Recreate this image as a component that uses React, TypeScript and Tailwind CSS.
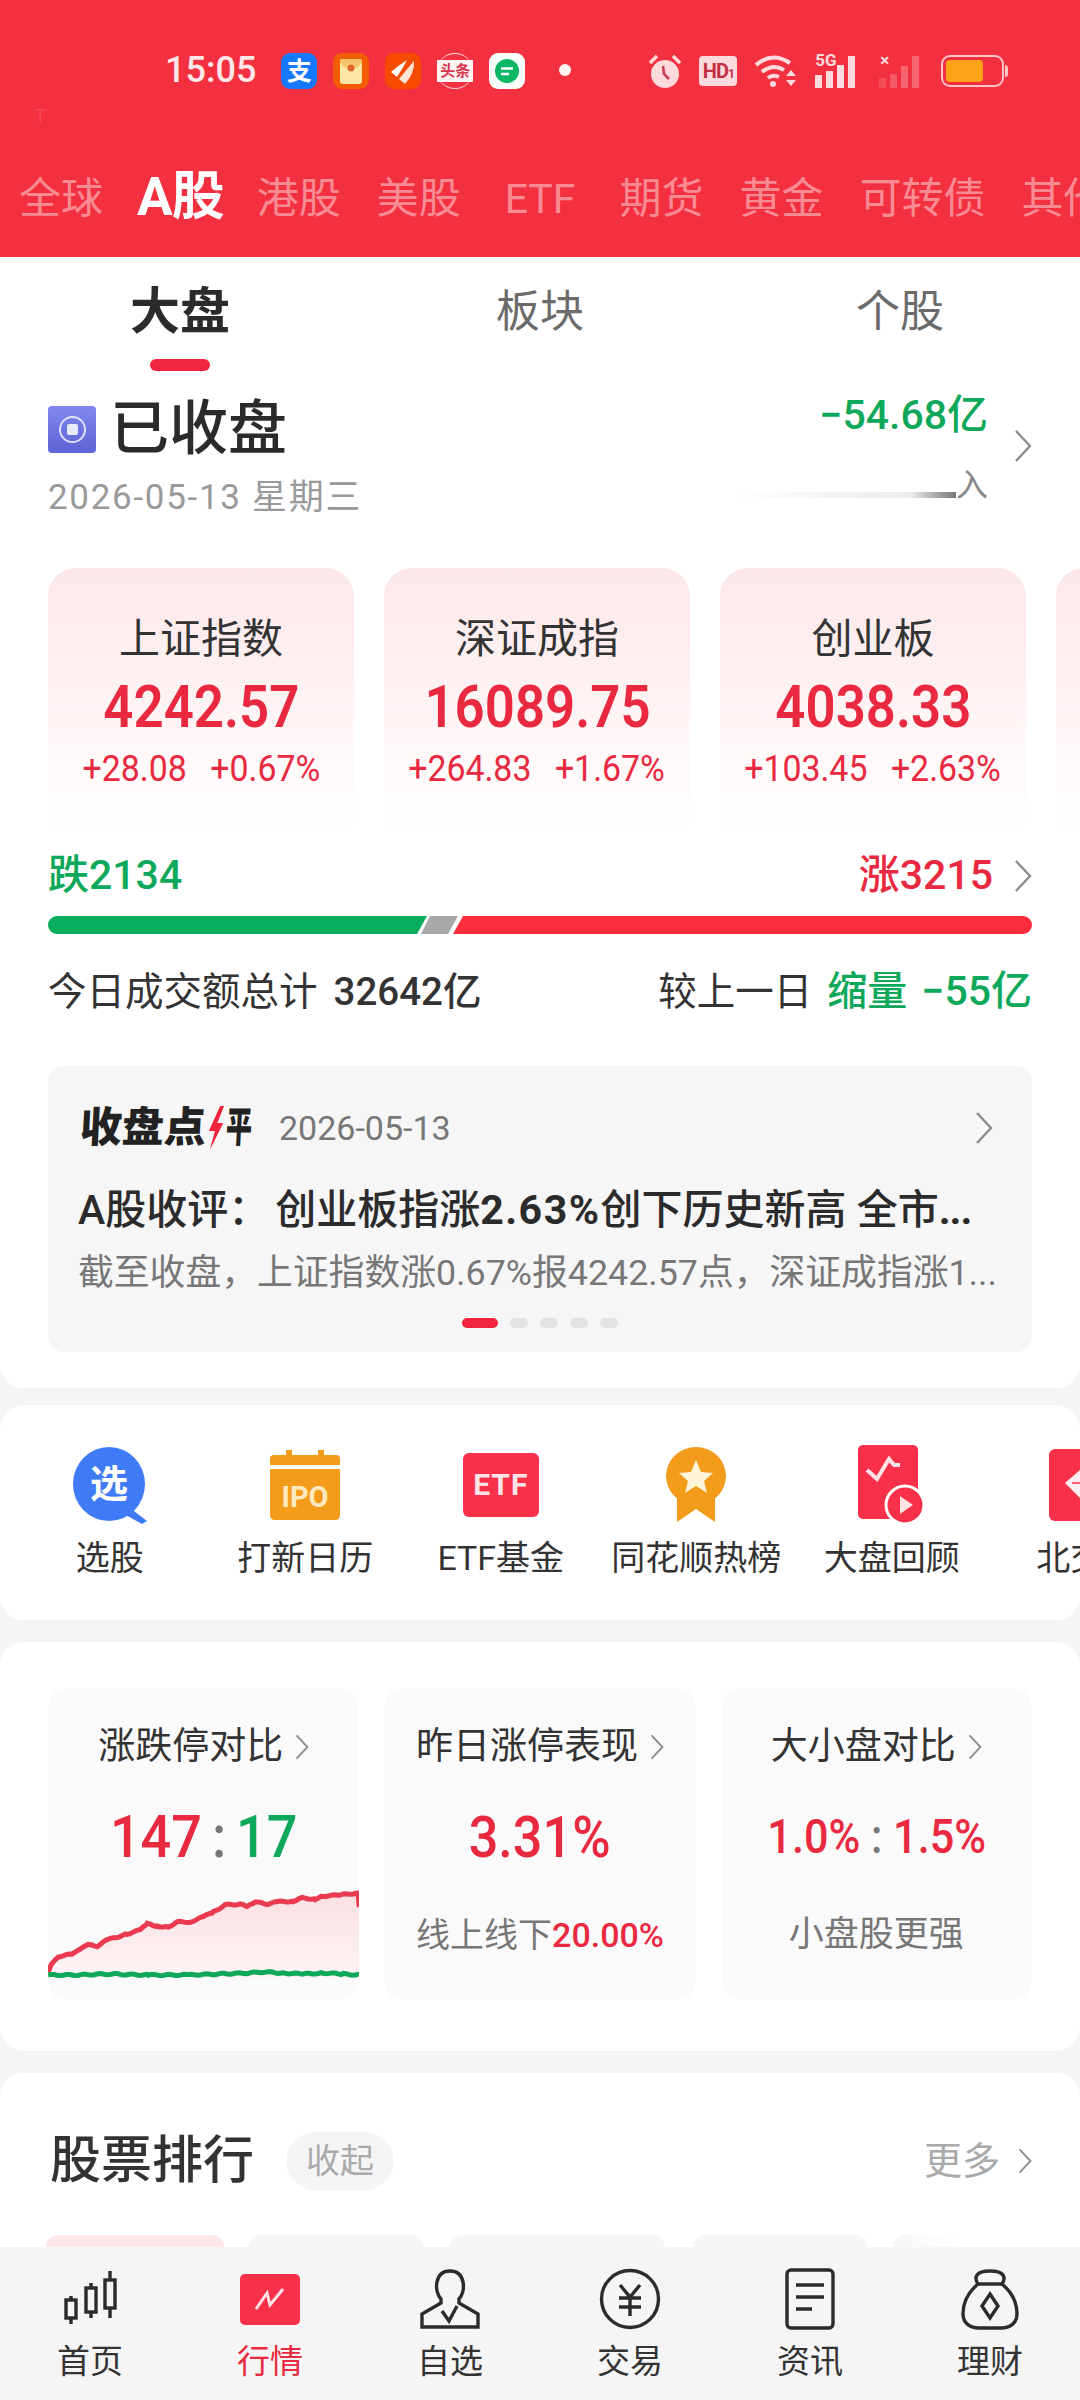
import React from "react";

const TOP_TABS = ["全球", "A股", "港股", "美股", "ETF", "期货", "黄金", "可转债", "其他"];

const INDEXES = [
  { name: "上证指数", price: "4242.57", diff: "+28.08", pct: "+0.67%" },
  { name: "深证成指", price: "16089.75", diff: "+264.83", pct: "+1.67%" },
  { name: "创业板", price: "4038.33", diff: "+103.45", pct: "+2.63%" },
];

const RED_KNOTS = [
  [0, 82], [4, 73], [12, 66], [25, 64], [34, 57], [40, 55], [49, 56], [59, 50], [79, 44], [92, 40],
  [99, 34], [109, 36], [120, 37], [129, 32], [142, 32], [155, 27], [165, 22], [177, 15], [192, 14],
  [199, 17], [207, 12], [219, 14], [229, 12], [245, 11], [254, 8], [267, 9], [275, 6], [292, 5], [309, 3],
];
const GREEN_KNOTS = [
  [0, 85], [30, 85], [60, 84], [100, 85], [140, 85], [170, 84], [200, 83], [215, 82], [235, 83], [255, 84], [275, 83], [295, 84], [311, 85],
];

// adds a small wobble between the knots so the lines look like real intraday data
function wobble(knots: number[][]) {
  const out: string[] = [];
  for (let i = 0; i < knots.length - 1; i++) {
    const [x0, y0] = knots[i];
    const [x1, y1] = knots[i + 1];
    for (let x = x0; x < x1; x += 3) {
      const y = y0 + ((y1 - y0) * (x - x0)) / (x1 - x0) + Math.sin(x * 1.7) * 0.7;
      out.push(`${x},${y.toFixed(1)}`);
    }
  }
  const last = knots[knots.length - 1];
  out.push(`${last[0]},${last[1]}`);
  return out.join(" ");
}

const RED_LINE = wobble(RED_KNOTS) + " 310,4 311,17";
const GREEN_LINE = wobble(GREEN_KNOTS);

function Chevron({ className = "w-[18px] h-[32px]" }: { className?: string }) {
  return (
    <svg viewBox="0 0 18 32" className={`shrink-0 ${className}`} fill="none" stroke="#8d8d8d" strokeWidth="2.4">
      <polyline points="2,1 16,16 2,31" />
    </svg>
  );
}

function StatusBar() {
  return (
    <div className="h-[122px] pt-[48px] pl-[165px] flex items-start">
      <span className="text-[36px] leading-[44px] text-[#ffe6e8] font-medium">15:05</span>
      <div className="flex gap-[16px] ml-[25px] mt-[5px]">
        <div className="w-[36px] h-[36px] rounded-[9px] bg-[#1677ff] flex items-center justify-center text-white text-[25px] leading-none font-bold">支</div>
        <svg viewBox="0 0 36 36" className="w-[36px] h-[36px]">
          <rect width="36" height="36" rx="9" fill="#f25c05" />
          <rect x="7" y="6" width="22" height="25" rx="3" fill="#fde7a6" />
          <path d="M7 10 Q18 22 29 10 V8 Q29 6 27 6 H9 Q7 6 7 8 Z" fill="#f8c66a" />
          <circle cx="18" cy="15" r="3.5" fill="#e0662a" />
        </svg>
        <svg viewBox="0 0 36 36" className="w-[36px] h-[36px]">
          <rect width="36" height="36" rx="9" fill="#f54a00" />
          <path d="M6 19 Q14 12 22 7 Q18 15 12 24 Z" fill="#fff" />
          <path d="M14 26 Q22 16 29 8 Q30 20 20 31 Z" fill="#fde3d2" />
        </svg>
        <div className="w-[36px] h-[36px] rounded-full border-y-[1px] border-[#ffd9dc] flex items-center justify-center">
          <div className="w-[36px] h-[22px] bg-[#fff3f3] text-[#d8344a] text-[15px] leading-[22px] font-bold text-center">头条</div>
        </div>
        <svg viewBox="0 0 36 36" className="w-[36px] h-[36px]">
          <rect width="36" height="36" rx="9" fill="#f6fffa" />
          <circle cx="18" cy="18" r="12" fill="#0bb765" />
          <path d="M12 15.5 H24 M12 21 H20" stroke="#fff" strokeWidth="2.4" />
        </svg>
        <div className="w-[12px] h-[12px] rounded-full bg-[#fff3f3] ml-[18px] mt-[11px]" />
      </div>
      <div className="ml-[77px] mt-[3px]">
        <StatusRight />
      </div>
    </div>
  );
}

function StatusRight() {
  const c = "#ffdadd";
  return (
    <div className="flex items-center h-[40px] gap-[17px]">
      <svg viewBox="0 0 34 36" className="w-[34px] h-[36px]">
        <circle cx="17" cy="21" r="14" fill={c} />
        <path d="M2 10 L9 3 M32 10 L25 3" stroke={c} strokeWidth="3.4" />
        <path d="M15 13 L16 21 L21 26" stroke="#c8404f" strokeWidth="2.6" fill="none" />
      </svg>
      <div className="w-[38px] h-[30px] rounded-[4px] bg-[#ffdadd] text-[#c22f42] text-[20px] leading-[30px] font-bold text-center tracking-[-1px]">
        HD<span className="text-[12px]">1</span>
      </div>
      <svg viewBox="0 0 44 34" className="w-[44px] h-[34px]" fill="none" stroke={c} strokeWidth="4">
        <path d="M2 11 Q18 -3 36 9" />
        <path d="M8 18 Q19 9 30 16" />
        <path d="M14 24 Q19 20 25 23" />
        <circle cx="19" cy="30" r="3" fill={c} stroke="none" />
        <path d="M32 22 L37 16 L42 22 Z M32 26 L42 26 L37 32 Z" fill={c} stroke="none" />
      </svg>
      <div className="relative w-[47px] h-[34px]">
        <span className="absolute left-0 top-[-4px] text-[17px] leading-[20px] font-bold text-[#ffdadd]">5G</span>
        <div className="absolute left-0 bottom-0 flex items-end gap-[4px]">
          <div className="w-[7px] h-[13px] bg-[#ffdadd]" />
          <div className="w-[7px] h-[17px] bg-[#ffdadd]" />
          <div className="w-[7px] h-[23px] bg-[#ffdadd]" />
          <div className="w-[7px] h-[32px] bg-[#ffdadd]" />
        </div>
      </div>
      <div className="relative w-[45px] h-[34px]">
        <span className="absolute left-[1px] top-[-3px] text-[17px] leading-[18px] font-bold text-[#ffdadd]">×</span>
        <div className="absolute left-0 bottom-0 flex items-end gap-[4px]">
          <div className="w-[7px] h-[10px] bg-white/15" />
          <div className="w-[7px] h-[14px] bg-white/20" />
          <div className="w-[7px] h-[22px] bg-white/25" />
          <div className="w-[7px] h-[32px] bg-white/25" />
        </div>
      </div>
      <div className="flex items-center">
        <div className="w-[63px] h-[32px] rounded-[9px] border-[2px] border-[#ffc4c8] p-[3px]">
          <div className="w-[37px] h-full rounded-[4px] bg-[#ffa319]" />
        </div>
        <div className="w-[3px] h-[12px] bg-[#ffc4c8] ml-[1px] rounded-r-sm" />
      </div>
    </div>
  );
}

function TopTabs() {
  return (
    <div className="h-[135px] pl-[19px] pt-[47px] flex items-start gap-[36px] whitespace-nowrap overflow-hidden">
      {TOP_TABS.map((t) =>
        t === "A股" ? (
          <span key={t} className="text-[53px] leading-[60px] -mt-[2px] -ml-[2px] -mr-[3px] font-bold text-white tracking-[-1px] shrink-0">{t}</span>
        ) : t === "ETF" ? (
          <span key={t} className="text-[41px] leading-[60px] mx-[8px] text-white/45 shrink-0">{t}</span>
        ) : (
          <span key={t} className="text-[42px] leading-[60px] text-white/45 shrink-0">{t}</span>
        )
      )}
    </div>
  );
}

function MarketTabs() {
  return (
    <div className="grid grid-cols-3 h-[115px]">
      <div className="flex flex-col items-center pt-[25px]">
        <span className="text-[50px] leading-[60px] font-bold text-[#2b2b2b]">大盘</span>
        <div className="w-[60px] h-[12px] rounded-full bg-[#f0243c] mt-[17px]" />
      </div>
      <div className="flex justify-center pt-[25px]">
        <span className="text-[44px] leading-[60px] text-[#6b6b6b]">板块</span>
      </div>
      <div className="flex justify-center pt-[25px]">
        <span className="text-[44px] leading-[60px] text-[#6b6b6b]">个股</span>
      </div>
    </div>
  );
}

function MarketStatus() {
  return (
    <div className="flex justify-between px-[48px]">
      <div>
        <div className="flex items-center h-[56px] mt-[29px] gap-[14px]">
          <div className="w-[48px] h-[47px] rounded-[4px] bg-gradient-to-b from-[#8088ee] to-[#5d62d6] flex items-center justify-center">
            <div className="w-[27px] h-[27px] rounded-full border-[2px] border-[#dfe0fb] flex items-center justify-center">
              <div className="w-[11px] h-[11px] rounded-[2px] bg-[#e9eafc]" />
            </div>
          </div>
          <span className="text-[59px] leading-[56px] font-medium text-[#2b2b2b]">已收盘</span>
        </div>
        <div className="mt-[21px] text-[35px] leading-[40px] text-[#999] tracking-[1.7px]">2026-05-13 星期三</div>
      </div>
      <div className="flex gap-[26px]">
        <div className="flex flex-col items-end">
          <span className="mt-[21px] text-[41px] leading-[44px] font-medium text-[#0ea85a]">−54.68亿</span>
          <div className="flex items-end mt-[31px]">
            <div className="w-[225px] h-[6px] mb-[4px] bg-gradient-to-r from-white via-[#ececec] via-80% to-[#777]" />
            <span className="text-[32px] leading-[34px] text-[#888]">入</span>
          </div>
        </div>
        <div className="mt-[58px]"><Chevron /></div>
      </div>
    </div>
  );
}

function IndexCards() {
  return (
    <div className="flex gap-[30px] pl-[48px] mt-[50px] overflow-hidden">
      {INDEXES.map((x) => (
        <div key={x.name} className="w-[306px] h-[264px] shrink-0 rounded-t-[28px] bg-gradient-to-b from-[#fde7e9] to-white flex flex-col items-center pt-[47px]">
          <span className="text-[41px] leading-[48px] text-[#333]">{x.name}</span>
          <span className="mt-[14px] text-[60px] leading-[60px] font-semibold text-[#e8293f] scale-x-[0.88]">{x.price}</span>
          <div className="mt-[12px] flex gap-[25px] text-[36px] leading-[40px] text-[#e8293f] scale-x-[0.94] whitespace-nowrap">
            <span>{x.diff}</span>
            <span>{x.pct}</span>
          </div>
        </div>
      ))}
      <div className="w-[306px] h-[264px] shrink-0 rounded-t-[28px] bg-gradient-to-b from-[#fde7e9] to-white" />
    </div>
  );
}

function RiseFall() {
  return (
    <div className="px-[48px]">
      <div className="flex justify-between items-center h-[50px] mt-[19px] text-[41px]">
        <span className="text-[#0ea85a] font-medium">跌2134</span>
        <div className="flex items-center gap-[21px]">
          <span className="text-[#e8293f] font-medium">涨3215</span>
          <Chevron />
        </div>
      </div>
      <div className="flex mt-[15px] h-[18px] rounded-full overflow-hidden">
        <div className="w-[379px] bg-[#08ae5c] [clip-path:polygon(0_0,100%_0,369px_100%,0_100%)]" />
        <div className="w-[37px] -ml-[6px] bg-[#a8a8a8] [clip-path:polygon(9px_0,37px_0,27px_100%,0_100%)]" />
        <div className="flex-1 -ml-[5px] bg-[#fb2d3c] [clip-path:polygon(10px_0,100%_0,100%_100%,0_100%)]" />
      </div>
      <div className="flex justify-between items-center h-[50px] mt-[33px] text-[38.5px] text-[#333] whitespace-nowrap">
        <span>今日成交额总计<span className="ml-[16px] font-medium">32642亿</span></span>
        <span className="flex items-center">
          较上一日
          <span className="ml-[15px] text-[40px] font-medium text-[#0ea85a]">缩量</span>
          <span className="ml-[14px] text-[41px] font-medium text-[#0ea85a]">−55亿</span>
        </span>
      </div>
    </div>
  );
}

function ReviewCard() {
  return (
    <div className="mx-[48px] mt-[49px] h-[286px] rounded-[16px] bg-[#f6f6f6] px-[30px] pt-[38px]">
      <div className="flex items-center h-[48px]">
        <span className="text-[42px] leading-[48px] font-black text-[#222] -skew-x-3 ml-[2px] flex items-center">
          收盘点
          <svg viewBox="0 0 16 44" className="w-[16px] h-[44px] ml-[2px]">
            <path d="M11 0 L1 25 H7 L3 44 L15 17 H9 L15 0 Z" fill="#f0243c" />
          </svg>
          <span className="inline-block w-[26px] ml-[2px] scale-x-[0.62] origin-left">平</span>
        </span>
        <span className="ml-[27px] text-[34px] leading-[48px] text-[#777]">2026-05-13</span>
        <div className="ml-auto mr-[9px]"><Chevron /></div>
      </div>
      <div className="mt-[33px] text-[41px] leading-[50px] font-medium text-[#2b2b2b] whitespace-nowrap overflow-hidden">
        A股收评：<span className="ml-[6px]">创业板指涨</span><span className="font-bold tracking-[1.5px]">2.63%</span>创下历史新高 全市<span className="font-bold tracking-[-1px]">...</span>
      </div>
      <div className="mt-[15px] text-[35.8px] leading-[46px] text-[#777] whitespace-nowrap overflow-hidden">
        截至收盘，上证指数涨0.67%报4242.57点，深证成指涨1...
      </div>
      <div className="flex justify-center gap-[12px] mt-[22px]">
        <div className="w-[36px] h-[10px] rounded-full bg-[#f0243c]" />
        <div className="w-[18px] h-[10px] rounded-full bg-[#e2e2e2]" />
        <div className="w-[18px] h-[10px] rounded-full bg-[#e2e2e2]" />
        <div className="w-[18px] h-[10px] rounded-full bg-[#e2e2e2]" />
        <div className="w-[18px] h-[10px] rounded-full bg-[#e2e2e2]" />
      </div>
    </div>
  );
}

function QuickIcon({ kind }: { kind: string }) {
  if (kind === "pick") {
    return (
      <svg viewBox="0 0 76 78" className="w-[76px] h-[78px]">
        <ellipse cx="37" cy="38" rx="36" ry="37" fill="#3f7bf7" />
        <path d="M58 62 L75 75 L70 78 L52 68 Z" fill="#3f7bf7" />
        <text x="37" y="51" textAnchor="middle" fontSize="38" fontWeight="700" fill="#fff">选</text>
      </svg>
    );
  }
  if (kind === "ipo") {
    return (
      <svg viewBox="0 0 70 72" className="w-[70px] h-[72px]">
        <path d="M4 6 H16 V1 H22 V6 H48 V1 H54 V6 H66 Q70 6 70 10 V16 H0 V10 Q0 6 4 6 Z" fill="#f39c1b" />
        <path d="M0 20 H70 V66 Q70 71 65 71 H5 Q0 71 0 66 Z" fill="#f39c1b" />
        <text x="35" y="58" textAnchor="middle" fontSize="29" fontWeight="700" fill="#ffe9bf">IPO</text>
      </svg>
    );
  }
  if (kind === "etf") {
    return (
      <div className="w-[76px] h-[64px] rounded-[6px] bg-[#f8304a] text-[#ffe3e6] text-[30px] leading-[64px] font-bold text-center tracking-[1px]">ETF</div>
    );
  }
  if (kind === "medal") {
    return (
      <svg viewBox="0 0 62 76" className="w-[62px] h-[76px]">
        <path d="M12 50 V75 L31 62 L50 75 V50 Z" fill="#f39c1b" />
        <ellipse cx="31" cy="29" rx="30" ry="29" fill="#f39c1b" />
        <path d="M31 13 L36 25 L48 26 L39 34 L42 46 L31 39 L20 46 L23 34 L14 26 L26 25 Z" fill="#fff3d8" />
      </svg>
    );
  }
  if (kind === "review") {
    return (
      <svg viewBox="0 0 68 80" className="w-[68px] h-[80px]">
        <rect x="0" y="0" width="60" height="74" rx="5" fill="#f8304a" />
        <path d="M9 25 L19 34 L31 14 L36 20 L42 20" fill="none" stroke="#ffe3e6" strokeWidth="4" />
        <circle cx="47" cy="60" r="19" fill="#f8304a" stroke="#fff" strokeWidth="3" />
        <path d="M42 51 L55 60 L42 69 Z" fill="#ffe3e6" />
      </svg>
    );
  }
  return (
    <svg viewBox="0 0 76 72" className="w-[76px] h-[72px]">
      <rect width="76" height="72" rx="6" fill="#f8304a" />
      <path d="M16 34 L32 20 H60 V52 H34 Z" fill="#ffeef0" />
      <path d="M23 34 H31" stroke="#f8304a" strokeWidth="1.5" />
    </svg>
  );
}

function QuickEntries() {
  const items = [
    { kind: "pick", label: "选股" },
    { kind: "ipo", label: "打新日历" },
    { kind: "etf", label: "ETF基金" },
    { kind: "medal", label: "同花顺热榜" },
    { kind: "review", label: "大盘回顾" },
    { kind: "bei", label: "北交所" },
  ];
  return (
    <section className="mt-[17px] h-[215px] rounded-[24px] bg-white flex pl-[12px] pt-[40px] overflow-hidden">
      {items.map((i) => (
        <div key={i.label} className="w-[195.5px] shrink-0 flex flex-col items-center">
          <div className="h-[80px] flex items-center justify-center"><QuickIcon kind={i.kind} /></div>
          <span className="mt-[11px] text-[34px] leading-[44px] text-[#333] whitespace-nowrap">{i.label}</span>
        </div>
      ))}
    </section>
  );
}

function CardTitle({ text }: { text: string }) {
  return (
    <div className="flex items-center justify-center gap-[12px] h-[42px] mt-[38px]">
      <span className="text-[37px] leading-[42px] text-[#333]">{text}</span>
      <Chevron className="w-[14px] h-[26px]" />
    </div>
  );
}

function CompareCards() {
  return (
    <section className="mt-[22px] h-[409px] rounded-[24px] bg-white px-[48px] pt-[46px] grid grid-cols-3 gap-x-[25px] items-start">
      <div className="h-[312px] rounded-[20px] bg-[#fafafa] overflow-hidden">
        <CardTitle text="涨跌停对比" />
        <div className="mt-[39px] h-[60px] flex justify-center gap-[11px] text-[60px] leading-[60px] font-medium scale-x-[0.9]">
          <span className="text-[#e8293f]">147</span>
          <span className="text-[#777]">:</span>
          <span className="text-[#0ea85a]">17</span>
        </div>
        <svg viewBox="0 0 311 88" className="mt-[23px] w-full h-[88px]">
          <defs>
            <linearGradient id="upFill" x1="0" y1="0" x2="0" y2="1">
              <stop offset="0" stopColor="#fbdfe2" />
              <stop offset="1" stopColor="#fdf4f5" />
            </linearGradient>
          </defs>
          <polygon points={`0,88 ${RED_LINE} 311,88`} fill="url(#upFill)" />
          <polyline points={RED_LINE} fill="none" stroke="#ea3a50" strokeWidth="5" />
          <polyline points={GREEN_LINE} fill="none" stroke="#0ea85a" strokeWidth="5" />
        </svg>
      </div>
      <div className="h-[312px] rounded-[20px] bg-[#fafafa]">
        <CardTitle text="昨日涨停表现" />
        <div className="mt-[39px] text-center text-[58px] leading-[60px] font-medium text-[#e8293f] scale-x-[0.9]">3.31%</div>
        <div className="mt-[46px] text-center text-[34px] leading-[44px] text-[#777]">
          线上线下<span className="text-[#e8293f] font-medium">20.00%</span>
        </div>
      </div>
      <div className="h-[312px] rounded-[20px] bg-[#fafafa]">
        <CardTitle text="大小盘对比" />
        <div className="mt-[39px] text-center text-[48px] leading-[60px] font-medium text-[#e8293f] scale-x-[0.9]">
          1.0% <span className="text-[#777]">:</span> 1.5%
        </div>
        <div className="mt-[46px] text-center text-[35px] leading-[44px] text-[#777]">小盘股更强</div>
      </div>
    </section>
  );
}

function StockRank() {
  return (
    <section className="mt-[22px] flex-1 rounded-t-[24px] bg-white pt-[59px] overflow-hidden">
      <div className="flex items-center h-[58px] pl-[50px] pr-[48px]">
        <span className="text-[51px] leading-[58px] font-medium text-[#333]">股票排行</span>
        <span className="ml-[32px] w-[108px] h-[58px] rounded-full bg-[#f5f5f5] text-[34px] leading-[58px] text-center text-[#aaa]">收起</span>
        <span className="ml-auto text-[38px] leading-[58px] text-[#aaa]">更多</span>
        <Chevron className="w-[14px] h-[30px] ml-[18px]" />
      </div>
      <div className="flex mt-[45px] pl-[46px] h-[30px]">
        <div className="w-[178px] rounded-t-[12px] bg-[#fde7e9]" />
        <div className="w-[176px] ml-[24px] rounded-t-[12px] bg-[#f6f6f6]" />
        <div className="w-[215px] ml-[26px] rounded-t-[12px] bg-[#f6f6f6]" />
        <div className="w-[175px] ml-[28px] rounded-t-[12px] bg-[#f6f6f6]" />
        <div className="w-[67px] ml-[25px] rounded-tl-[12px] bg-gradient-to-r from-[#f6f6f6] to-white" />
      </div>
    </section>
  );
}

function NavIcon({ kind }: { kind: string }) {
  const stroke = { fill: "none", stroke: "#2b2b2b", strokeWidth: 3.4 };
  if (kind === "home") {
    return (
      <svg viewBox="0 0 60 62" className="w-[60px] h-[62px]" {...stroke}>
        <path d="M11 28 V56 M31 15 V50 M50 3 V50" />
        <rect x="6" y="32" width="10" height="18" fill="#f5f5f5" />
        <rect x="26" y="20" width="10" height="24" fill="#f5f5f5" />
        <rect x="45" y="12" width="10" height="28" fill="#f5f5f5" />
      </svg>
    );
  }
  if (kind === "market") {
    return (
      <div className="w-[60px] h-[51px] rounded-[5px] bg-[#f8304a] flex items-center justify-center">
        <svg viewBox="0 0 32 24" className="w-[32px] h-[24px]" fill="none" stroke="#ffe3e6" strokeWidth="3">
          <polyline points="2,22 13,6 16,18 29,2" />
        </svg>
      </div>
    );
  }
  if (kind === "watch") {
    return (
      <svg viewBox="0 0 62 62" className="w-[62px] h-[62px]" {...stroke}>
        <path d="M22 31 C15 24 15 3 31 3 C47 3 47 24 40 31 L40 35 L59 46 V59 H3 V46 L22 35 Z" />
        <polyline points="23,43 30,53 38,38" />
      </svg>
    );
  }
  if (kind === "trade") {
    return (
      <svg viewBox="0 0 62 62" className="w-[62px] h-[62px]" {...stroke}>
        <circle cx="31" cy="31" r="28.5" />
        <path d="M21 17 L31 29 L41 17 M20 30 H42 M20 39 H42 M31 29 V48" />
      </svg>
    );
  }
  if (kind === "news") {
    return (
      <svg viewBox="0 0 50 62" className="w-[50px] h-[62px]" {...stroke}>
        <rect x="2" y="2" width="46" height="58" rx="4" />
        <path d="M11 17 H39 M11 29 H39 M11 41 H27" />
      </svg>
    );
  }
  return (
    <svg viewBox="0 0 58 62" className="w-[58px] h-[62px]" {...stroke}>
      <path d="M17 16 C13 10 14 3 29 3 C44 3 45 10 41 16 Z" />
      <path d="M17 16 C5 26 2 38 2 46 C2 55 9 60 18 60 H40 C49 60 56 55 56 46 C56 38 53 26 41 16" />
      <path d="M29 26 L37 38 L29 50 L21 38 Z" />
    </svg>
  );
}

function BottomNav() {
  const items = [
    { kind: "home", label: "首页" },
    { kind: "market", label: "行情", active: true },
    { kind: "watch", label: "自选" },
    { kind: "trade", label: "交易" },
    { kind: "news", label: "资讯" },
    { kind: "money", label: "理财" },
  ];
  return (
    <nav className="h-[153px] shrink-0 bg-[#f5f5f5] grid grid-cols-6 relative">
      {items.map((i) => (
        <div key={i.label} className="flex flex-col items-center pt-[20px]">
          <div className="h-[64px] flex items-center justify-center"><NavIcon kind={i.kind} /></div>
          <span className={`mt-[9px] text-[33px] leading-[44px] ${i.active ? "text-[#e8293f]" : "text-[#333]"}`}>{i.label}</span>
        </div>
      ))}
    </nav>
  );
}

export default function App() {
  return (
    <div className="w-[1080px] h-[2400px] flex flex-col overflow-hidden bg-[#f5f5f5] font-['Roboto','Noto_Sans_CJK_SC',sans-serif]">
      <header className="relative h-[257px] shrink-0 bg-[#f3303f]">
        <StatusBar />
        <TopTabs />
        <span className="absolute left-[35px] top-[104px] text-[18px] leading-[24px] text-white/15">T</span>
      </header>
      <section className="h-[1131px] shrink-0 bg-white rounded-b-[24px]">
        <MarketTabs />
        <MarketStatus />
        <IndexCards />
        <RiseFall />
        <ReviewCard />
      </section>
      <QuickEntries />
      <CompareCards />
      <StockRank />
      <BottomNav />
    </div>
  );
}
